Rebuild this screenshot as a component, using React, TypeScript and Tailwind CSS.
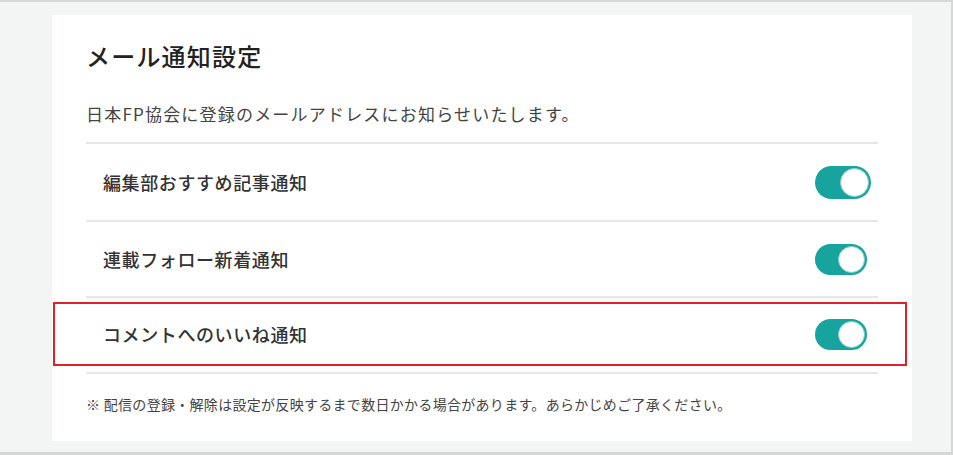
import React from 'react';

const rows = [
  { label: '編集部おすすめ記事通知', big: true },
  { label: '連載フォロー新着通知', big: false },
  { label: 'コメントへのいいね通知', big: false, marked: true },
];

function Toggle({ big }: { big?: boolean }) {
  return (
    <div
      className={
        big
          ? 'flex items-center justify-end w-[56px] h-[33px] -mr-[4px] rounded-full bg-[#17a49e] p-[2px]'
          : 'flex items-center justify-end w-[52px] h-[31px] rounded-full bg-[#17a49e] p-[2px]'
      }
    >
      <span
        className={
          big
            ? 'block w-[29px] h-[29px] rounded-full bg-white border border-[#7fcfcb]'
            : 'block w-[27px] h-[27px] rounded-full bg-white border border-[#7fcfcb]'
        }
      />
    </div>
  );
}

export default function App() {
  return (
    <div
      className="w-[953px] h-[455px] bg-[#f3f5f5] border-t-2 border-r-2 border-b-[3px] border-[#d6d8d8] pt-[13px] pl-[52px]"
      style={{ fontFamily: '"Noto Sans CJK JP", "Noto Sans", sans-serif' }}
    >
      <div className="w-[860px] h-[426px] bg-white px-[34px] pt-[25px]">
        {/* heading */}
        <h1 className="text-[24px] leading-[32px] font-medium tracking-[1.2px] text-[#222]">
          メール通知設定
        </h1>
        <p className="mt-[30px] text-[17px] leading-[24px] tracking-[1.2px] text-[#444]">
          日本FP協会に登録のメールアドレスにお知らせいたします。
        </p>
        <div className="mt-[16px] border-t-2 border-[#e6e8e8]" />

        {/* toggle rows */}
        {rows.map((r) =>
          r.marked ? (
            <div key={r.label} className="h-[76px] border-b-2 border-[#e6e8e8] py-[4px]">
              <div className="-ml-[33px] -mr-[29px] h-[64px] border-2 border-[#e3202a] flex items-center justify-between pl-[48px] pr-[38px]">
                <span className="text-[18px] font-medium tracking-[0.6px] text-[#333]">{r.label}</span>
                <Toggle big={r.big} />
              </div>
            </div>
          ) : (
            <div
              key={r.label}
              className={
                r.big
                  ? 'h-[78px] border-b-2 border-[#e6e8e8] flex items-center justify-between pl-[17px] pr-[11px]'
                  : 'h-[76px] border-b-2 border-[#e6e8e8] flex items-center justify-between pl-[17px] pr-[11px]'
              }
            >
              <span className="text-[18px] font-medium tracking-[0.6px] text-[#333]">{r.label}</span>
              <Toggle big={r.big} />
            </div>
          )
        )}

        <p className="mt-[20px] text-[14px] leading-[20px] tracking-[0.3px] text-[#444]">
          ※ 配信の登録・解除は設定が反映するまで数日かかる場合があります。あらかじめご了承ください。
        </p>
      </div>
    </div>
  );
}
